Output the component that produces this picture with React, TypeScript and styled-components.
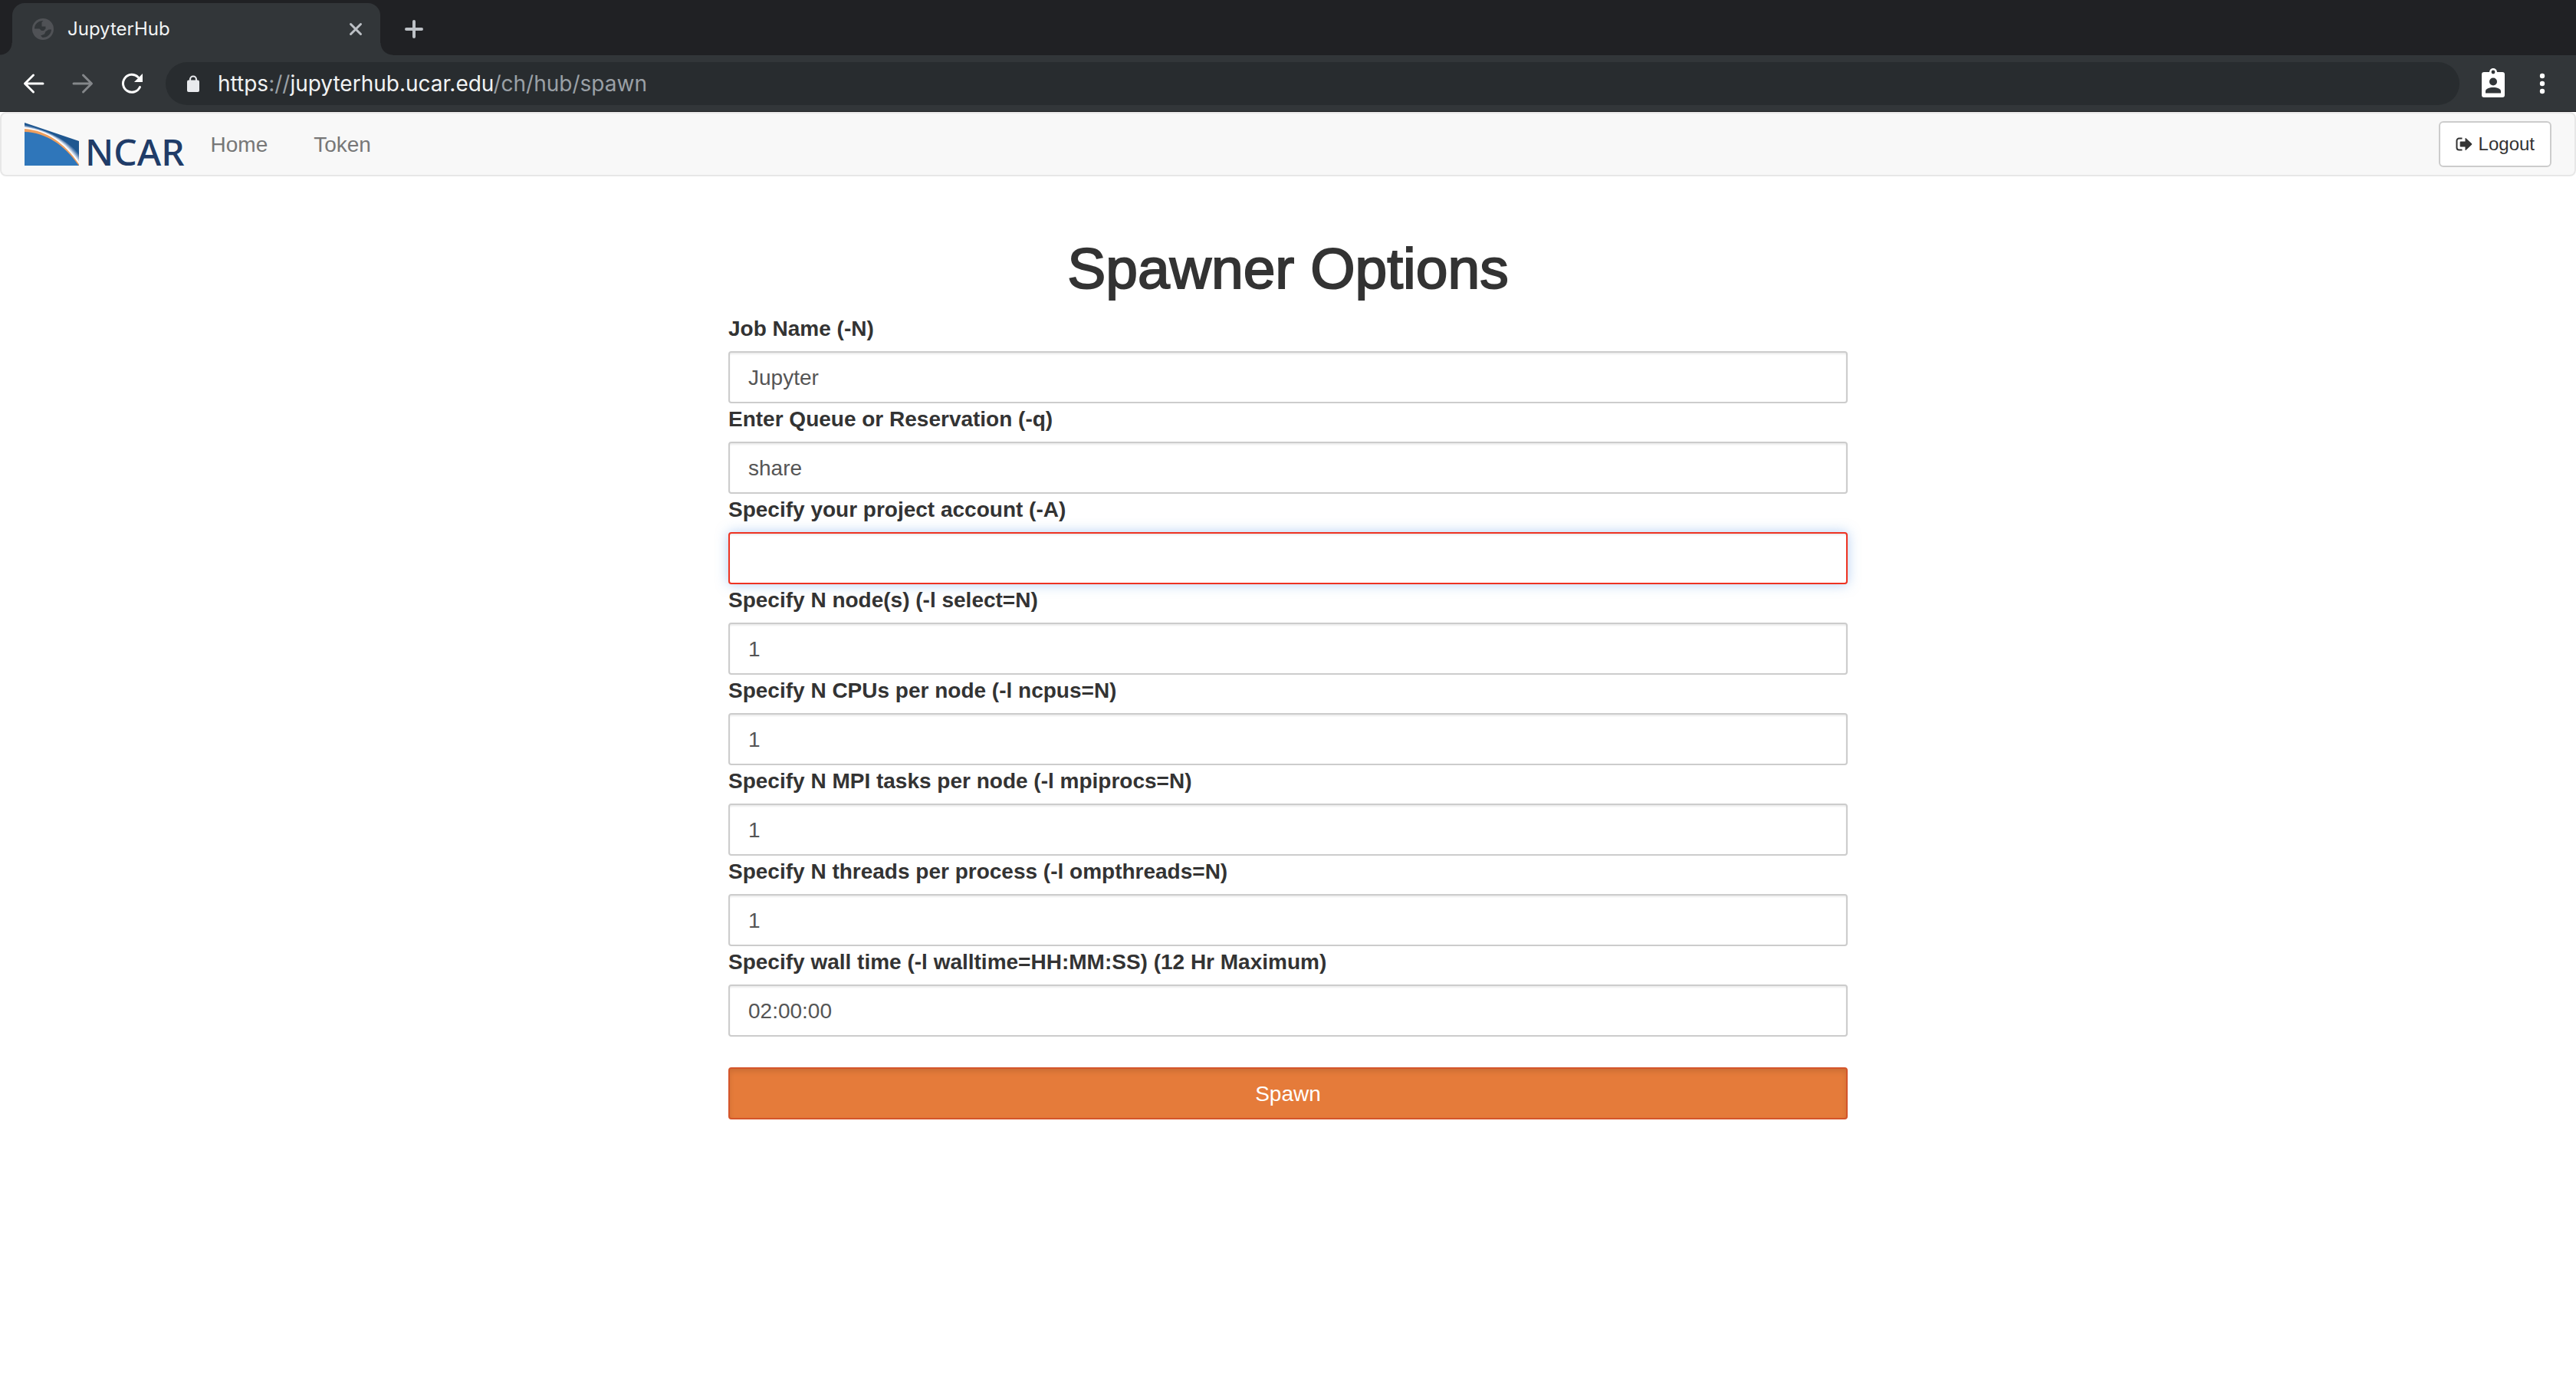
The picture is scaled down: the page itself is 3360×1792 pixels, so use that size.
import React, { useState } from 'react';
import styled, { createGlobalStyle } from 'styled-components';

const GlobalStyle = createGlobalStyle`
  *, *::before, *::after { box-sizing: border-box; }
  body {
    margin: 0;
    background: #fff;
    color: #333;
    font-family: "Liberation Sans", Arial, sans-serif;
    font-size: 28px;
    line-height: 40px;
  }
`;

const chromeFont = 'Inter, Roboto, "Liberation Sans", sans-serif';

const TabStrip = styled.div`
  display: flex;
  align-items: flex-end;
  height: 72px;
  padding: 4px 16px 0;
  background: #202124;
  font-family: ${chromeFont};
`;

const Tab = styled.div`
  position: relative;
  display: flex;
  align-items: center;
  width: 480px;
  height: 68px;
  padding: 0 16px 0 26px;
  border-radius: 16px 16px 0 0;
  background: #323639;
  color: #f1f3f4;

  &::before,
  &::after {
    content: '';
    position: absolute;
    bottom: 0;
    width: 16px;
    height: 16px;
  }
  &::before {
    right: 100%;
    background: radial-gradient(circle at 0 0, #202124 15px, #323639 16px);
  }
  &::after {
    left: 100%;
    background: radial-gradient(circle at 100% 0, #202124 15px, #323639 16px);
  }
`;

const TabTitle = styled.span`
  flex: 1;
  margin-left: 18px;
  font-size: 24px;
  line-height: 32px;
`;

const IconButton = styled.button<{ $size: number }>`
  display: flex;
  align-items: center;
  justify-content: center;
  width: ${(p) => p.$size}px;
  height: ${(p) => p.$size}px;
  padding: 0;
  border: 0;
  background: none;
  color: #fff;

  &:disabled { color: #84878a; }
`;

const NewTabButton = styled(IconButton)`
  margin: 0 0 18px 28px;
`;

const Toolbar = styled.div`
  display: flex;
  align-items: center;
  gap: 24px;
  height: 74px;
  padding: 0 24px;
  border-bottom: 1px solid #202124;
  background: #323639;
`;

const AddressBar = styled.div`
  display: flex;
  flex: 1;
  align-items: center;
  gap: 20px;
  height: 56px;
  padding: 0 24px;
  border-radius: 28px;
  background: #282c2f;
  color: #e8eaed;
`;

const Address = styled.a`
  color: #9aa0a6;
  font-family: ${chromeFont};
  font-size: 28px;
  line-height: 32px;
  text-decoration: none;
`;

const Bright = styled.span`
  color: #f1f3f4;
`;

const Navbar = styled.nav`
  display: flex;
  align-items: center;
  justify-content: space-between;
  height: 84px;
  padding: 0 30px;
  border: 2px solid #e7e7e7;
  border-radius: 8px;
  background: #f8f8f8;
`;

const NavGroup = styled.div`
  display: flex;
  align-items: center;
`;

const Brand = styled.a`
  display: flex;
  align-items: flex-end;
  gap: 8px;
  height: 56px;
  margin-right: 4px;
  color: #203c68;
  font-family: "Noto Sans", "Open Sans", sans-serif;
  font-size: 48px;
  font-weight: 500;
  line-height: 36px;
  text-decoration: none;
`;

const NavLink = styled.a`
  padding: 2px 30px 0;
  color: #777;
  text-decoration: none;
`;

const LogoutButton = styled.button`
  display: flex;
  align-items: center;
  gap: 8px;
  height: 60px;
  padding: 0 20px;
  border: 2px solid #ccc;
  border-radius: 6px;
  background: #fff;
  color: #333;
  font: 24px/36px "Liberation Sans", Arial, sans-serif;
`;

const Main = styled.main`
  width: 100%;
  max-width: 1460px;
  margin: 0 auto;
  padding-top: 80px;
`;

const Title = styled.h1`
  margin: 0 0 18px;
  font-size: 75px;
  font-weight: 400;
  line-height: 80px;
  text-align: center;
  -webkit-text-stroke: 2px #333;
`;

const Form = styled.form`
  display: flex;
  flex-direction: column;
`;

const FieldLabel = styled.label`
  margin-bottom: 8px;
  font-weight: 700;
  line-height: 42px;
`;

const FieldInput = styled.input<{ $invalid: boolean }>`
  width: 100%;
  height: 68px;
  padding: 14px 24px 12px;
  border: 2px solid ${(p) => (p.$invalid ? '#ee3322' : '#ccc')};
  border-radius: 4px;
  outline: 0;
  background: #fff;
  box-shadow: inset 0 2px 2px rgba(0, 0, 0, 0.075)${(p) => (p.$invalid ? ', 0 0 16px rgba(102, 160, 233, 0.5)' : '')};
  color: #555;
  font: 28px/38px "Liberation Sans", Arial, sans-serif;
`;

const SpawnButton = styled.button`
  height: 68px;
  margin-top: 40px;
  padding: 2px 24px 0;
  border: 2px solid #d4552b;
  border-radius: 4px;
  background: #e57b3a;
  box-shadow: inset 0 4px 6px rgba(0, 0, 0, 0.1);
  color: #fff;
  font: 28px/40px "Liberation Sans", Arial, sans-serif;
`;

const fields = [
  { id: 'job', label: 'Job Name (-N)', value: 'Jupyter' },
  { id: 'queue', label: 'Enter Queue or Reservation (-q)', value: 'share' },
  { id: 'account', label: 'Specify your project account (-A)', value: '', required: true },
  { id: 'nodes', label: 'Specify N node(s) (-l select=N)', value: '1' },
  { id: 'cpus', label: 'Specify N CPUs per node (-l ncpus=N)', value: '1' },
  { id: 'mpi', label: 'Specify N MPI tasks per node (-l mpiprocs=N)', value: '1' },
  { id: 'threads', label: 'Specify N threads per process (-l ompthreads=N)', value: '1' },
  { id: 'walltime', label: 'Specify wall time (-l walltime=HH:MM:SS) (12 Hr Maximum)', value: '02:00:00' },
];

function GlobeIcon() {
  return (
    <svg width="28" height="28" viewBox="0 0 28 28">
      <circle cx="14" cy="14" r="14" fill="#505256" />
      <path
        d="M3 13.500C3 7.500 8 3 14.500 3L12.500 5V10.500H17.500V13.500L15 16H12L9.500 13.500ZM25 14.500C25 20 20 25 13.500 25L11 22.500 16 20.500 17.500 17 21.500 14.500Z"
        fill="#323639"
      />
    </svg>
  );
}

function CloseIcon() {
  return (
    <svg width="32" height="32" viewBox="0 0 32 32" stroke="#bdc1c6" strokeWidth="3" strokeLinecap="round">
      <path d="M9.5 9.5 22.5 22.5M22.5 9.5 9.5 22.5" />
    </svg>
  );
}

function PlusIcon() {
  return (
    <svg width="32" height="32" viewBox="0 0 32 32" stroke="#bdc1c6" strokeWidth="4" strokeLinecap="round">
      <path d="M16 6V26M6 16H26" />
    </svg>
  );
}

function ArrowIcon({ forward = false }: { forward?: boolean }) {
  return (
    <svg width="40" height="40" viewBox="0 0 40 40" fill="none" stroke="currentColor" strokeWidth="3" strokeLinecap="round" strokeLinejoin="round">
      <path d={forward ? 'M8 20H31M20.500 9 31.500 20 20.500 31' : 'M32 20H9M19.500 9 8.500 20 19.500 31'} />
    </svg>
  );
}

function ReloadIcon() {
  return (
    <svg width="40" height="40" viewBox="0 0 40 40" fill="none" stroke="#fff" strokeWidth="3" strokeLinecap="round">
      <path d="M30.500 24.500A11.500 11.500 0 1 1 28 11.500" />
      <path d="M34 7V18H23Z" fill="#fff" stroke="none" />
    </svg>
  );
}

function LockIcon() {
  return (
    <svg width="24" height="24" viewBox="0 0 24 24">
      <path d="M8 10V6.500A4 4 0 0 1 16 6.500V10" fill="none" stroke="currentColor" strokeWidth="2.2" />
      <rect x="4" y="7.500" width="16" height="15.500" rx="2" fill="currentColor" />
    </svg>
  );
}

function BadgeIcon() {
  return (
    <svg width="40" height="40" viewBox="0 0 40 40">
      <rect x="5" y="5" width="30" height="33" rx="3" fill="#fff" />
      <circle cx="20" cy="5" r="5" fill="#fff" />
      <circle cx="20" cy="5" r="2.4" fill="#323639" />
      <circle cx="20" cy="17.500" r="5" fill="#323639" />
      <path d="M10 32.500V30C10 26.500 15 25 20 25S30 26.500 30 30V32.500Z" fill="#323639" />
    </svg>
  );
}

function MoreIcon() {
  return (
    <svg width="40" height="40" viewBox="0 0 40 40" fill="#fff">
      <circle cx="20" cy="10" r="3.2" />
      <circle cx="20" cy="20" r="3.2" />
      <circle cx="20" cy="30" r="3.2" />
    </svg>
  );
}

function SignOutIcon() {
  return (
    <svg width="22" height="18" viewBox="0 0 22 18">
      <path d="M8.500 1.500H4.500A3 3 0 0 0 1.500 4.500V13.500A3 3 0 0 0 4.500 16.500H8.500" fill="none" stroke="#333" strokeWidth="2" />
      <path d="M6.500 5.500H12.500V1.500Q12.500 0.500 13.500 1.300L21 8.300Q21.700 9 21 9.700L13.500 16.700Q12.500 17.500 12.500 16.500V12.500H6.500Q5.700 12.500 5.700 11.700V6.300Q5.700 5.500 6.500 5.500Z" fill="#333" />
    </svg>
  );
}

function NcarEmblem() {
  return (
    <svg width="71" height="56" viewBox="0 0 71 56">
      <path d="M0 0 71 24V56H0Z" fill="#1f5790" />
      <path d="M0 3C30 10 56 22 71 42V56H0Z" fill="#4a78ab" />
      <path d="M0 4C30 10 55 22 71 45V56H0Z" fill="#86a4c9" />
      <path d="M0 5C30 10 54 23 71 48V56H0Z" fill="#c6d3e5" />
      <path d="M0 6C30 10 53 24 71 51V56H0Z" fill="#fff" />
      <path d="M0 8C28 10 52 26 71 54V56H0Z" fill="#ee9f5f" />
      <path d="M0 12C28 13 52 29 70 55L71 56H0Z" fill="#2f76ba" />
    </svg>
  );
}

export default function App() {
  const [values, setValues] = useState(fields.map((f) => f.value));

  return (
    <>
      <GlobalStyle />
      <header>
        <TabStrip>
          <Tab>
            <GlobeIcon />
            <TabTitle>JupyterHub</TabTitle>
            <IconButton $size={32} aria-label="Close tab"><CloseIcon /></IconButton>
          </Tab>
          <NewTabButton $size={32} aria-label="New tab"><PlusIcon /></NewTabButton>
        </TabStrip>
        <Toolbar>
          <IconButton $size={40} aria-label="Back"><ArrowIcon /></IconButton>
          <IconButton $size={40} aria-label="Forward" disabled><ArrowIcon forward /></IconButton>
          <IconButton $size={40} aria-label="Reload"><ReloadIcon /></IconButton>
          <AddressBar>
            <LockIcon />
            <Address href="#">
              <Bright>https</Bright>://<Bright>jupyterhub.ucar.edu</Bright>/ch/hub/spawn
            </Address>
          </AddressBar>
          <IconButton $size={40} aria-label="Profile"><BadgeIcon /></IconButton>
          <IconButton $size={40} aria-label="Menu"><MoreIcon /></IconButton>
        </Toolbar>
      </header>
      <Navbar>
        <NavGroup>
          <Brand href="#"><NcarEmblem />NCAR</Brand>
          <NavLink href="#">Home</NavLink>
          <NavLink href="#">Token</NavLink>
        </NavGroup>
        <LogoutButton><SignOutIcon />Logout</LogoutButton>
      </Navbar>
      <Main>
        <Title>Spawner Options</Title>
        <Form onSubmit={(e) => e.preventDefault()}>
          {fields.map((field, i) => (
            <React.Fragment key={field.id}>
              <FieldLabel htmlFor={field.id}>{field.label}</FieldLabel>
              <FieldInput
                id={field.id}
                type="text"
                value={values[i]}
                $invalid={Boolean(field.required) && values[i] === ''}
                onChange={(e) => setValues(values.map((v, j) => (j === i ? e.target.value : v)))}
              />
            </React.Fragment>
          ))}
          <SpawnButton type="submit">Spawn</SpawnButton>
        </Form>
      </Main>
    </>
  );
}
